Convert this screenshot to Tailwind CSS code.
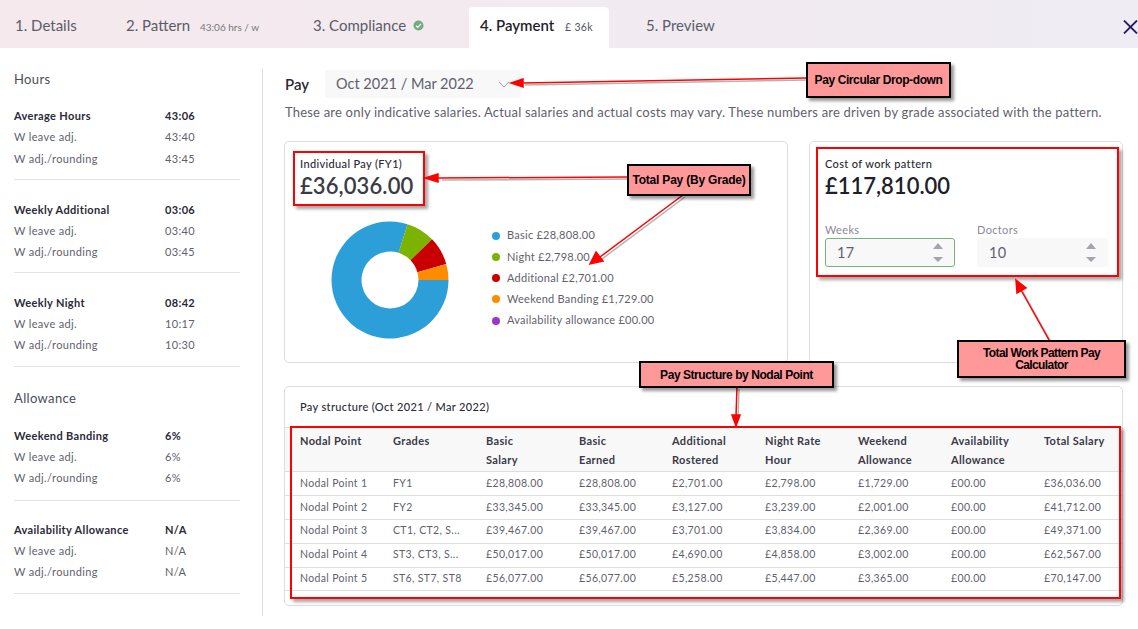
<!DOCTYPE html>
<html lang="en">
<head>
  <meta charset="UTF-8" />
  <title>Payment | Work Pattern</title>
  <script src="https://cdn.jsdelivr.net/npm/@tailwindcss/browser@4"></script>
</head>
<body class="relative w-[1138px] h-[629px] overflow-hidden bg-white font-['Lato',sans-serif] text-[#5f5f6e] tracking-[0.35px]">

  <!-- Tabs -->
  <header class="relative flex h-12 pl-[15px] pt-[7px] bg-gradient-to-r from-[#f5e9ed] to-[#efecf3] text-[15px] tracking-normal text-[#5c5c68]">
    <div class="w-[111px] h-[37px] leading-[37px]">1. Details</div>
    <div class="w-[187px] h-[37px] leading-[37px]">2. Pattern <span class="ml-1.5 text-[10px] text-[#77777f]">43:06 hrs / w</span></div>
    <div class="w-[156px] h-[37px] leading-[37px] flex items-center gap-[7px]">3. Compliance
      <svg width="11" height="11" viewBox="0 0 11 11"><circle cx="5.5" cy="5.5" r="5" fill="#6fae79"/><path d="M3 5.7 4.8 7.4 8 3.9" fill="none" stroke="#fff" stroke-width="1.3"/></svg>
    </div>
    <div class="w-[140px] h-[41px] leading-[37px] px-[11px] bg-white rounded-t-[4px] text-[#1f1f2b] font-semibold">4. Payment <span class="ml-[7px] text-[10.5px] tracking-[0.3px] font-normal text-[#55555f]">£ 36k</span></div>
    <div class="ml-[37px] h-[37px] leading-[37px]">5. Preview</div>
    <svg class="absolute left-[1123px] top-5" width="15" height="14" viewBox="0 0 15 14"><path d="M1 .5 14 13.5M14 .5 1 13.5" stroke="#2a1a6e" stroke-width="1.8"/></svg>
  </header>

  <div class="flex pt-[21px]">
    <!-- Left summary -->
    <aside class="w-[263px] h-[547px] border-r border-[#dddddd] pl-[14px] text-[11px]">
      <div class="w-[226px]">
        <h2 class="h-5 leading-5 text-[13px] text-[#4c4c5a]">Hours</h2>
        <div class="pt-4 pb-2.5 border-b border-[#e3e3e3]">
          <div class="flex h-[21px] leading-[21px] font-bold text-[#2a2a38]"><span class="w-[151px]">Average Hours</span><span>43:06</span></div>
          <div class="flex h-[22px] leading-[22px]"><span class="w-[151px]">W leave adj.</span><span>43:40</span></div>
          <div class="flex h-[21px] leading-[21px]"><span class="w-[151px]">W adj./rounding</span><span>43:45</span></div>
        </div>
        <div class="pt-[19px] pb-[10px] border-b border-[#e3e3e3]">
          <div class="flex h-[21px] leading-[21px] font-bold text-[#2a2a38]"><span class="w-[151px]">Weekly Additional</span><span>03:06</span></div>
          <div class="flex h-[21px] leading-[21px]"><span class="w-[151px]">W leave adj.</span><span>03:40</span></div>
          <div class="flex h-[21px] leading-[21px]"><span class="w-[151px]">W adj./rounding</span><span>03:45</span></div>
        </div>
        <div class="pt-[19px] pb-[11px] border-b border-[#e3e3e3]">
          <div class="flex h-[21px] leading-[21px] font-bold text-[#2a2a38]"><span class="w-[151px]">Weekly Night</span><span>08:42</span></div>
          <div class="flex h-[21px] leading-[21px]"><span class="w-[151px]">W leave adj.</span><span>10:17</span></div>
          <div class="flex h-[21px] leading-[21px]"><span class="w-[151px]">W adj./rounding</span><span>10:30</span></div>
        </div>
        <h2 class="mt-[21px] h-5 leading-5 text-[13px] text-[#4c4c5a]">Allowance</h2>
        <div class="pt-[17px] pb-3 border-b border-[#e3e3e3]">
          <div class="flex h-[21px] leading-[21px] font-bold text-[#2a2a38]"><span class="w-[151px]">Weekend Banding</span><span>6%</span></div>
          <div class="flex h-[21px] leading-[21px]"><span class="w-[151px]">W leave adj.</span><span>6%</span></div>
          <div class="flex h-[21px] leading-[21px]"><span class="w-[151px]">W adj./rounding</span><span>6%</span></div>
        </div>
        <div class="pt-[18px] pb-[11px] border-b border-[#e3e3e3]">
          <div class="flex h-[21px] leading-[21px] font-bold text-[#2a2a38]"><span class="w-[151px]">Availability Allowance</span><span>N/A</span></div>
          <div class="flex h-[21px] leading-[21px]"><span class="w-[151px]">W leave adj.</span><span>N/A</span></div>
          <div class="flex h-[21px] leading-[21px]"><span class="w-[151px]">W adj./rounding</span><span>N/A</span></div>
        </div>
      </div>
    </aside>

    <main class="w-[860px] pl-[21px]">
      <!-- Pay circular -->
      <div class="flex items-center h-7 mt-px pl-px tracking-normal">
        <span class="w-10 text-[15px] font-semibold text-[#2a2a38]">Pay</span>
        <div class="w-[196px] h-7 flex items-center justify-between pl-[11px] pr-[11px] bg-[#f8f8f8] rounded-[3px] text-[14.5px]">
          <span>Oct 2021 / Mar 2022</span>
          <svg width="12" height="7" viewBox="0 0 12 7"><path d="M1 1 6 6 11 1" fill="none" stroke="#9a9aa2" stroke-width="1"/></svg>
        </div>
      </div>
      <p class="mt-[4px] pl-px h-[20px] leading-[20px] text-[13px] tracking-[0.2px] whitespace-nowrap">These are only indicative salaries. Actual salaries and actual costs may vary. These numbers are driven by grade associated with the pattern.</p>

      <!-- Cards -->
      <div class="flex gap-[21px] mt-[19px]">
        <section class="w-[504px] h-[222px] border border-[#dddddd] rounded-[5px] pt-[14px] pl-[15px]">
          <div class="h-[15px] leading-[15px] text-[11px] text-[#2a2a38] font-medium">Individual Pay (FY1)</div>
          <div class="h-[30px] leading-[30px] text-[22px] tracking-[0.1px] font-semibold text-[#3b3b46]">£36,036.00</div>
          <div class="flex mt-[19px] ml-[30px]">
            <svg width="120" height="120" viewBox="0 0 120 120">
              <path d="M77.59 4.21A58.5 58.5 0 1 0 118.5 60L88.5 60A28.5 28.5 0 1 1 68.57 32.82Z" fill="#2d9fd8"/>
              <path d="M102.08 19.36A58.5 58.5 0 0 0 77.59 4.21L68.57 32.82A28.5 28.5 0 0 1 80.5 40.2Z" fill="#7cb300"/>
              <path d="M116.24 43.88A58.5 58.5 0 0 0 102.08 19.36L80.5 40.2A28.5 28.5 0 0 1 87.4 52.14Z" fill="#c90000"/>
              <path d="M118.5 60A58.5 58.5 0 0 0 116.24 43.88L87.4 52.14A28.5 28.5 0 0 1 88.5 60Z" fill="#ff8c00"/>
            </svg>
            <ul class="ml-[42px] mt-[5px] text-[11px] tracking-[0.25px]">
              <li class="flex items-center h-[21.25px]"><span class="w-2 h-2 rounded-full bg-[#2d9fd8] mr-[7px]"></span>Basic £28,808.00</li>
              <li class="flex items-center h-[21.25px]"><span class="w-2 h-2 rounded-full bg-[#7cb300] mr-[7px]"></span>Night £2,798.00</li>
              <li class="flex items-center h-[21.25px]"><span class="w-2 h-2 rounded-full bg-[#c90000] mr-[7px]"></span>Additional £2,701.00</li>
              <li class="flex items-center h-[21.25px]"><span class="w-2 h-2 rounded-full bg-[#ff8c00] mr-[7px]"></span>Weekend Banding £1,729.00</li>
              <li class="flex items-center h-[21.25px]"><span class="w-2 h-2 rounded-full bg-[#9c36c9] mr-[7px]"></span>Availability allowance £00.00</li>
            </ul>
          </div>
        </section>

        <section class="w-[314px] h-[222px] border border-[#dddddd] rounded-[5px] pt-[14px] pl-[15px]">
          <div class="h-[15px] leading-[15px] text-[11px] text-[#2a2a38] font-medium">Cost of work pattern</div>
          <div class="h-[30px] leading-[30px] text-[22px] tracking-normal font-semibold text-[#1f1f2b]">£117,810.00</div>
          <div class="flex gap-[22px] mt-[21px]">
            <label class="block w-[130px] text-[11px] leading-[15px] text-[#8a8a96]">Weeks
              <div class="flex items-center justify-between h-[29px] mt-px pl-[11px] pr-[10px] bg-[#f8f8f8] border border-[#78b27f] rounded-[3px] text-[14.5px] text-[#5f5f6e]">
                <span>17</span>
                <svg width="12" height="21" viewBox="0 0 12 21"><path d="M6 1 11 7H1ZM1 15H11L6 20Z" fill="#a4a4ac"/></svg>
              </div>
            </label>
            <label class="block w-[131px] text-[11px] leading-[15px] text-[#8a8a96]">Doctors
              <div class="flex items-center justify-between h-[29px] mt-px pl-[12px] pr-[11px] bg-[#f8f8f8] rounded-[3px] text-[14.5px] text-[#5f5f6e]">
                <span>10</span>
                <svg width="12" height="21" viewBox="0 0 12 21"><path d="M6 1 11 7H1ZM1 15H11L6 20Z" fill="#a4a4ac"/></svg>
              </div>
            </label>
          </div>
        </section>
      </div>

      <!-- Pay structure -->
      <section class="w-[839px] h-[220px] mt-[23px] border border-[#dddddd] rounded-[5px]">
        <h3 class="pl-[15px] h-10 leading-10 text-[11px] text-[#2a2a38] font-medium">Pay structure (Oct 2021 / Mar 2022)</h3>
        <table class="w-[837px] table-fixed text-[10.5px] text-left">
          <thead class="bg-[#f8f8f8] text-[#3a3a48] font-bold text-[11px] leading-[19px]">
            <tr class="h-[44px] border-y border-[#dedede] align-top">
              <th class="w-[108px] pl-[15px] pt-[3px]">Nodal Point</th>
              <th class="w-[93px] pt-[3px]">Grades</th>
              <th class="w-[93px] pt-[3px]">Basic<br>Salary</th>
              <th class="w-[93px] pt-[3px]">Basic<br>Earned</th>
              <th class="w-[93px] pt-[3px]">Additional<br>Rostered</th>
              <th class="w-[93px] pt-[3px]">Night Rate<br>Hour</th>
              <th class="w-[93px] pt-[3px]">Weekend<br>Allowance</th>
              <th class="w-[93px] pt-[3px]">Availability<br>Allowance</th>
              <th class="pt-[3px]">Total Salary</th>
            </tr>
          </thead>
          <tbody>
            <tr class="h-6 border-b border-[#dedede]"><td class="pl-[15px]">Nodal Point 1</td><td>FY1</td><td>£28,808.00</td><td>£28,808.00</td><td>£2,701.00</td><td>£2,798.00</td><td>£1,729.00</td><td>£00.00</td><td>£36,036.00</td></tr>
            <tr class="h-6 border-b border-[#dedede]"><td class="pl-[15px]">Nodal Point 2</td><td>FY2</td><td>£33,345.00</td><td>£33,345.00</td><td>£3,127.00</td><td>£3,239.00</td><td>£2,001.00</td><td>£00.00</td><td>£41,712.00</td></tr>
            <tr class="h-[23.5px] border-b border-[#dedede]"><td class="pl-[15px]">Nodal Point 3</td><td>CT1, CT2, S...</td><td>£39,467.00</td><td>£39,467.00</td><td>£3,701.00</td><td>£3,834.00</td><td>£2,369.00</td><td>£00.00</td><td>£49,371.00</td></tr>
            <tr class="h-6 border-b border-[#dedede]"><td class="pl-[15px]">Nodal Point 4</td><td>ST3, CT3, S...</td><td>£50,017.00</td><td>£50,017.00</td><td>£4,690.00</td><td>£4,858.00</td><td>£3,002.00</td><td>£00.00</td><td>£62,567.00</td></tr>
            <tr class="h-[23.5px] border-b border-[#dedede]"><td class="pl-[15px]">Nodal Point 5</td><td>ST6, ST7, ST8</td><td>£56,077.00</td><td>£56,077.00</td><td>£5,258.00</td><td>£5,447.00</td><td>£3,365.00</td><td>£00.00</td><td>£70,147.00</td></tr>
          </tbody>
        </table>
      </section>
    </main>
  </div>

  <!-- Annotations over the screenshot -->
  <div class="absolute left-[293px] top-[151px] w-[132px] h-[55px] border-[2px] border-[#ff0000] shadow-[3px_3px_3px_rgba(0,0,0,0.35)]"></div>
  <div class="absolute left-[816px] top-[147px] w-[303px] h-[130px] border-[2px] border-[#ff0000] shadow-[3px_3px_3px_rgba(0,0,0,0.35)]"></div>
  <div class="absolute left-[290px] top-[426px] w-[831px] h-[173px] border-[2px] border-[#ff0000] shadow-[3px_3px_3px_rgba(0,0,0,0.35)]"></div>

  <svg class="absolute left-0 top-0" width="1138" height="629" viewBox="0 0 1138 629">
    <g stroke="#000" stroke-opacity="0.3" stroke-width="1.5" fill="none" transform="translate(2 2)">
      <path d="M806 78 523 83"/><path d="M627 177 440 178"/><path d="M683 195 600 257"/><path d="M1049 340 1021 290"/><path d="M737 387 736 416"/>
    </g>
    <g stroke="#ff0000" stroke-width="1.5" fill="#ff0000">
      <path d="M806 78 523 83"/><path d="M523 79 511 83 523 87Z"/>
      <path d="M627 177 438 178"/><path d="M438 174 425 178 438 182Z"/>
      <path d="M683 195 600 257"/><path d="M596 252 590 264 603 261Z"/>
      <path d="M1049 340 1021 290"/><path d="M1016 280 1026 288 1017 293Z"/>
      <path d="M737 387 736 416"/><path d="M732 415 736 426 740 415Z"/>
    </g>
  </svg>

  <div class="absolute left-[806px] top-[62px] w-[145px] h-[36px] flex items-center justify-center border-2 border-black bg-[#ff9999] shadow-[3px_3px_3px_rgba(0,0,0,0.4)] font-['Liberation_Sans',sans-serif] font-bold text-[12px] tracking-[-0.4px] text-black">Pay Circular Drop-down</div>
  <div class="absolute left-[627px] top-[164px] w-[124px] h-[32px] flex items-center justify-center border-2 border-black bg-[#ff9999] shadow-[3px_3px_3px_rgba(0,0,0,0.4)] font-['Liberation_Sans',sans-serif] font-bold text-[12px] tracking-[-0.2px] text-black">Total Pay (By Grade)</div>
  <div class="absolute left-[639px] top-[361px] w-[195px] h-[27px] flex items-center justify-center border-2 border-black bg-[#ff9999] shadow-[3px_3px_3px_rgba(0,0,0,0.4)] font-['Liberation_Sans',sans-serif] font-bold text-[12px] tracking-[-0.45px] text-black">Pay Structure by Nodal Point</div>
  <div class="absolute left-[957px] top-[340px] w-[169px] h-[38px] flex items-center justify-center text-center leading-[12px] border-2 border-black bg-[#ff9999] shadow-[3px_3px_3px_rgba(0,0,0,0.4)] font-['Liberation_Sans',sans-serif] font-bold text-[12px] tracking-[-0.6px] text-black">Total Work Pattern Pay<br>Calculator</div>

</body>
</html>
